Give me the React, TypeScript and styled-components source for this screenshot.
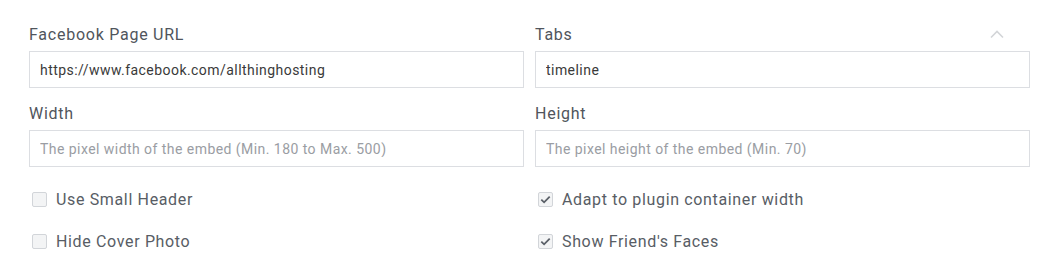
import React from "react";
import styled, { createGlobalStyle } from "styled-components";

const Global = createGlobalStyle`
  html, body { margin: 0; padding: 0; background: #ffffff; }
  body { font-family: Roboto, "Noto Sans", Arial, sans-serif; }
  * { box-sizing: border-box; }
`;

const Panel = styled.div`
  position: relative;
  width: 1041px;
  padding: 23px 12px 0 29px;
`;

const Grid = styled.div`
  display: grid;
  grid-template-columns: 495px 495px;
  column-gap: 11px;
  row-gap: 14px;
`;

const Field = styled.div`
  display: flex;
  flex-direction: column;
  gap: 4px;
`;

const Label = styled.label`
  font-size: 16px;
  line-height: 24px;
  letter-spacing: 0.75px;
  color: #50555c;
`;

const Input = styled.input`
  height: 37px;
  width: 100%;
  border: 1px solid #dcdee2;
  border-radius: 0;
  padding: 0 10px;
  font-family: Roboto, Arial, sans-serif;
  font-size: 14px;
  letter-spacing: 0.45px;
  color: #3a3a3a;
  outline: none;
  &::placeholder { color: #9a9da3; }
`;

const Checks = styled.div`
  display: grid;
  grid-template-columns: 495px 495px;
  column-gap: 11px;
  row-gap: 18px;
  margin-top: 20px;
`;

const CheckRow = styled.label`
  display: flex;
  align-items: center;
  gap: 9px;
  padding-left: 3px;
  height: 24px;
  font-size: 16px;
  letter-spacing: 0.65px;
  color: #585d65;
`;

const Box = styled.span`
  width: 15px;
  height: 15px;
  border: 1px solid #d2d5d9;
  border-radius: 2px;
  background: #f3f4f5;
  display: flex;
  align-items: center;
  justify-content: center;
`;

const Collapse = styled.span`
  position: absolute;
  top: 24px;
  right: 36px;
  width: 16px;
  height: 10px;
`;

const Check = ({ on }: { on: boolean }) => (
  <Box>
    {on && (
      <svg width="11" height="9" viewBox="0 0 11 9">
        <path d="M1.3 4.6 L4.1 7.3 L9.7 1.6" fill="none" stroke="#5b6068" strokeWidth="1.8" />
      </svg>
    )}
  </Box>
);

export default function App() {
  return (
    <>
      <Global />
      <Panel>
        <Collapse>
          <svg width="16" height="10" viewBox="0 0 16 10">
            <path d="M2 8.5 L8 2.5 L14 8.5" fill="none" stroke="#d3d5d8" strokeWidth="1.6" />
          </svg>
        </Collapse>
        <Grid>
          <Field>
            <Label>Facebook Page URL</Label>
            <Input defaultValue="https://www.facebook.com/allthinghosting" />
          </Field>
          <Field>
            <Label>Tabs</Label>
            <Input defaultValue="timeline" />
          </Field>
          <Field>
            <Label>Width</Label>
            <Input placeholder="The pixel width of the embed (Min. 180 to Max. 500)" />
          </Field>
          <Field>
            <Label>Height</Label>
            <Input placeholder="The pixel height of the embed (Min. 70)" />
          </Field>
        </Grid>
        <Checks>
          <CheckRow>
            <Check on={false} />
            Use Small Header
          </CheckRow>
          <CheckRow>
            <Check on={true} />
            Adapt to plugin container width
          </CheckRow>
          <CheckRow>
            <Check on={false} />
            Hide Cover Photo
          </CheckRow>
          <CheckRow>
            <Check on={true} />
            Show Friend's Faces
          </CheckRow>
        </Checks>
      </Panel>
    </>
  );
}
